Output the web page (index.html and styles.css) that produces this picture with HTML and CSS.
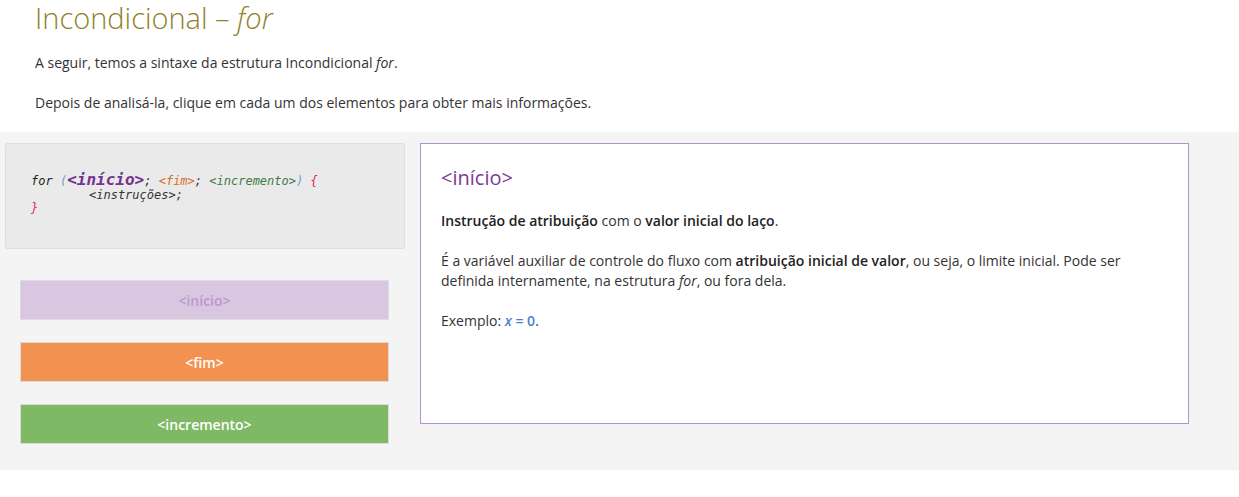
FILE: index.html
```html
<!DOCTYPE html>
<html lang="pt">
<head>
<meta charset="utf-8">
<title>Incondicional – for</title>
<link rel="stylesheet" href="styles.css">
</head>
<body>
<header class="intro">
  <h1 class="title">Incondicional – <em>for</em></h1>
  <p class="lead">A seguir, temos a sintaxe da estrutura Incondicional <em>for</em>.</p>
  <p class="lead">Depois de analisá-la, clique em cada um dos elementos para obter mais informações.</p>
</header>
<section class="stage">
  <div class="left">
    <div class="code">
      <div class="code-line"><span class="c-kw">for</span> <span class="c-paren">(</span><span class="c-inicio">&lt;início&gt;</span><span class="c-punct">;</span> <span class="c-fim">&lt;fim&gt;</span><span class="c-punct">;</span> <span class="c-inc">&lt;incremento&gt;</span><span class="c-paren">)</span> <span class="c-brace">{</span></div>
      <div class="code-line indent"><span class="c-instr">&lt;instruções&gt;;</span></div>
      <div class="code-line"><span class="c-brace">}</span></div>
    </div>
    <div class="buttons">
      <button class="btn btn-inicio">&lt;início&gt;</button>
      <button class="btn btn-fim">&lt;fim&gt;</button>
      <button class="btn btn-inc">&lt;incremento&gt;</button>
    </div>
  </div>
  <div class="panel">
    <h2 class="panel-title">&lt;início&gt;</h2>
    <p class="panel-text"><strong>Instrução de atribuição</strong> com o <strong>valor inicial do laço</strong>.</p>
    <p class="panel-text">É a variável auxiliar de controle do fluxo com <strong>atribuição inicial de valor</strong>, ou seja, o limite inicial. Pode ser definida internamente, na estrutura <em>for</em>, ou fora dela.</p>
    <p class="panel-text">Exemplo: <span class="example"><em>x</em> = 0</span>.</p>
  </div>
</section>
</body>
</html>
```

FILE: styles.css
```css
html, body {
  margin: 0;
  padding: 0;
  background: #ffffff;
}

body {
  font-family: "Open Sans", "Noto Sans", sans-serif;
  color: #333333;
  font-size: 14px;
  line-height: 20px;
}

.intro {
  padding: 0 35px;
}

.title {
  margin: 0;
  font-weight: 300;
  font-size: 29px;
  line-height: 36px;
  color: #918128;
}

.title em {
  font-style: italic;
}

.lead {
  margin: 17px 0 0;
}

.lead + .lead {
  margin-top: 20px;
}

.stage {
  margin-top: 19px;
  background: #f4f4f4;
  padding: 11px 50px 26px 5px;
  display: flex;
  gap: 15px;
  align-items: flex-start;
}

.left {
  width: 400px;
  flex: none;
}

.code {
  box-sizing: border-box;
  height: 106px;
  background: #eaeaea;
  border: 1px solid #dedede;
  border-radius: 2px;
  padding: 29px 0 0 25px;
  font-family: "DejaVu Sans Mono", "Liberation Mono", monospace;
  font-style: italic;
  font-size: 12px;
  line-height: 13.5px;
  color: #333333;
}

.code-line {
  white-space: pre;
}

.indent {
  padding-left: 58px;
}

.c-kw { color: #222222; }
.c-paren { color: #6ea1d8; }
.c-inicio {
  color: #74338f;
  font-weight: bold;
  font-size: 16px;
}
.c-punct { color: #333333; }
.c-fim { color: #dc6a26; }
.c-inc { color: #3f7a46; }
.c-brace { color: #e8254f; }
.c-instr { color: #333333; }

.buttons {
  display: flex;
  flex-direction: column;
  gap: 22px;
  padding: 31px 16px 0 15px;
}

.btn {
  display: block;
  box-sizing: border-box;
  width: 100%;
  height: 40px;
  border: 1px solid #dcdcdc;
  font-family: "Open Sans", "Noto Sans", sans-serif;
  font-weight: 600;
  font-size: 14px;
  color: #ffffff;
  cursor: pointer;
  padding: 0;
}

.btn-inicio {
  background: #d9c7e1;
  color: #b998ca;
}

.btn-fim {
  background: #f39150;
}

.btn-inc {
  background: #80b966;
}

.panel {
  flex: 1;
  box-sizing: border-box;
  height: 281px;
  background: #ffffff;
  border: 1px solid #b391c9;
  padding: 20px 20px;
}

.panel-title {
  margin: 0 0 19px;
  font-weight: 400;
  font-size: 20px;
  line-height: 28px;
  color: #7a3b98;
}

.panel-text {
  margin: 0 0 20px;
  color: #333333;
}

.panel-text strong {
  font-weight: 600;
  color: #222222;
}

.example {
  color: #4e7fd0;
  font-weight: 600;
}
```
